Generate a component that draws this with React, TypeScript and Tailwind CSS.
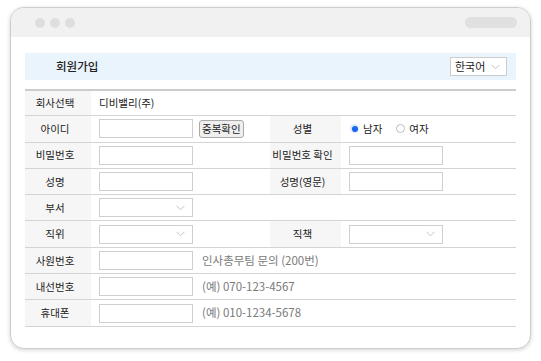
import React from "react";

const FONT = { fontFamily: '"Noto Sans CJK KR", "Noto Sans", sans-serif' };

const Chevron = ({ className = "" }: { className?: string }) => (
  <svg width="9" height="6" viewBox="0 0 9 6" className={className}>
    <path d="M0.5 0.8 L4.5 4.8 L8.5 0.8" fill="none" stroke="#c4c4c4" strokeWidth="1" />
  </svg>
);

const Input = () => (
  <div className="w-[94px] h-[19px] border border-[#cfcfcf] bg-white" />
);

const Select = () => (
  <div className="w-[94px] h-[19px] border border-[#cfcfcf] bg-white flex items-center justify-end pr-[7px]">
    <Chevron />
  </div>
);

const Label = ({ children }: { children: React.ReactNode }) => (
  <div className="bg-[#f6f6f6] flex items-center justify-center text-[#222] pr-[6px]">{children}</div>
);

const Hint = ({ children }: { children: React.ReactNode }) => (
  <span className="text-[#7a7a7a] ml-[9px] text-[11.5px]">{children}</span>
);

const Row = ({ children }: { children: React.ReactNode }) => (
  <div className="grid grid-cols-[66px_179px_71px_175px] h-[26.3px] border-b border-[#d4d4d4]">{children}</div>
);

const Value = ({ children }: { children?: React.ReactNode }) => (
  <div className="flex items-center pl-[8px]">{children}</div>
);

export default function App() {
  return (
    <div className="w-[541px] h-[361px] bg-white pt-[7px] pl-[10px]" style={FONT}>
      <div className="w-[521px] h-[342px] rounded-[14px] border border-[#cdcdcd] bg-white overflow-hidden shadow-[0_1px_4px_rgba(0,0,0,0.18)]">
        {/* title bar */}
        <div className="h-[29px] bg-[#f1f1f1] flex items-center justify-between pl-[24px] pr-[13px]">
          <div className="flex gap-[5px]">
            <span className="w-[10px] h-[10px] rounded-full bg-[#dedede]" />
            <span className="w-[10px] h-[10px] rounded-full bg-[#dedede]" />
            <span className="w-[10px] h-[10px] rounded-full bg-[#dedede]" />
          </div>
          <span className="w-[52px] h-[11px] rounded-full bg-[#e0e0e0]" />
        </div>

        <div className="px-[14px] pt-[16px] text-[10.5px]">
          {/* header */}
          <div className="h-[27px] bg-[#eaf4fc] flex items-center justify-between pl-[31px] pr-[9px]">
            <span className="text-[11.5px] font-medium text-[#222]">회원가입</span>
            <div className="w-[57px] h-[19px] bg-white border border-[#cccccc] flex items-center justify-between pl-[4px] pr-[6px]">
              <span className="text-[11px] text-[#222]">한국어</span>
              <Chevron />
            </div>
          </div>

          {/* form table */}
          <div className="mt-[9px] border-t-2 border-[#cccccc]">
            <div className="grid grid-cols-[66px_425px] h-[25.3px] border-b border-[#d4d4d4]">
              <Label>회사선택</Label>
              <Value><span className="text-[#222]">디비밸리(주)</span></Value>
            </div>
            <Row>
              <Label>아이디</Label>
              <Value>
                <Input />
                <button className="ml-[6px] h-[18px] px-[2px] border border-[#a9a9a9] rounded-[3px] bg-[#efefef] text-[#222] text-[10.5px] leading-none">
                  중복확인
                </button>
              </Value>
              <Label>성별</Label>
              <Value>
                <span className="w-[9px] h-[9px] rounded-full bg-[#dce8fb] flex items-center justify-center ml-[1px]">
                  <span className="w-[6px] h-[6px] rounded-full bg-[#1a66ee]" />
                </span>
                <span className="ml-[4px] text-[#222]">남자</span>
                <span className="ml-[14px] w-[9px] h-[9px] rounded-full border border-[#bdbdbd] bg-white" />
                <span className="ml-[4px] text-[#222]">여자</span>
              </Value>
            </Row>
            <Row>
              <Label>비밀번호</Label>
              <Value><Input /></Value>
              <Label>비밀번호 확인</Label>
              <Value><Input /></Value>
            </Row>
            <Row>
              <Label>성명</Label>
              <Value><Input /></Value>
              <Label>성명(영문)</Label>
              <Value><Input /></Value>
            </Row>
            <Row>
              <Label>부서</Label>
              <Value><Select /></Value>
              <div />
              <div />
            </Row>
            <Row>
              <Label>직위</Label>
              <Value><Select /></Value>
              <Label>직책</Label>
              <Value><Select /></Value>
            </Row>
            <div className="grid grid-cols-[66px_425px] h-[26.3px] border-b border-[#d4d4d4]">
              <Label>사원번호</Label>
              <Value><Input /><Hint>인사총무팀 문의 (200번)</Hint></Value>
            </div>
            <div className="grid grid-cols-[66px_425px] h-[26.3px] border-b border-[#d4d4d4]">
              <Label>내선번호</Label>
              <Value><Input /><Hint>(예) 070-123-4567</Hint></Value>
            </div>
            <div className="grid grid-cols-[66px_425px] h-[26.3px] border-b border-[#d4d4d4]">
              <Label>휴대폰</Label>
              <Value><Input /><Hint>(예) 010-1234-5678</Hint></Value>
            </div>
          </div>
        </div>
      </div>
    </div>
  );
}
